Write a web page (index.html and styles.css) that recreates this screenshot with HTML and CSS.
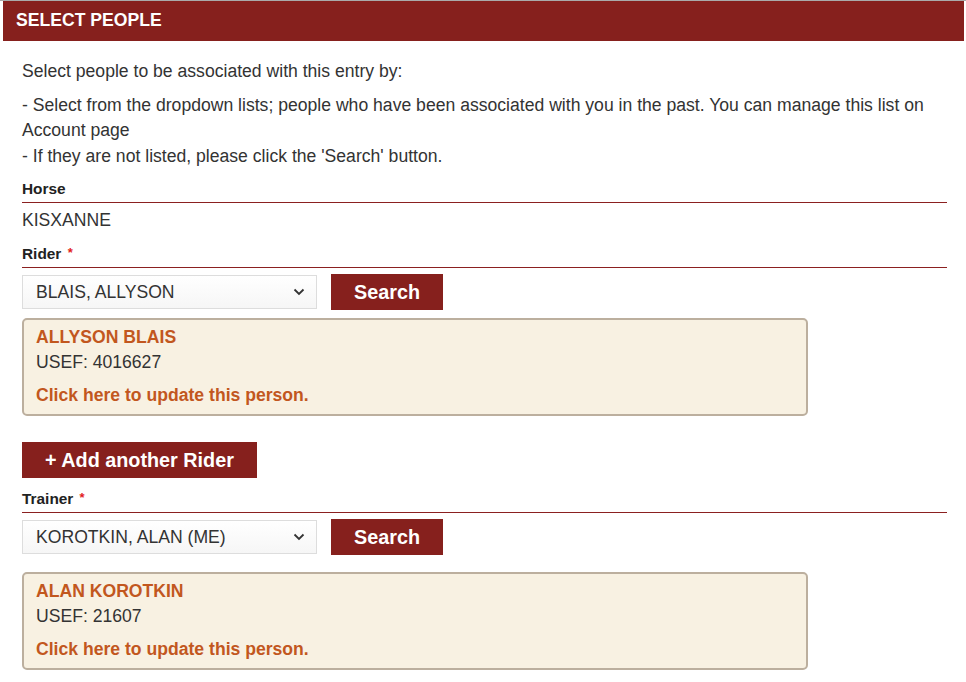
FILE: index.html
```html
<!DOCTYPE html>
<html>

<head>
    <meta charset="UTF-8" />
    <meta name="viewport" content="width=device-width, initial-scale=1" />
    <link rel="stylesheet" href="styles.css">
</head>

<body>
    <section class="panel">
        <header class="panel-head">SELECT PEOPLE</header>
        <div class="panel-body">
            <p class="intro">Select people to be associated with this entry by:</p>
            <p class="hint">
                - Select from the dropdown lists; people who have been associated with you in the past. You can manage this list on Account page<br>
                - If they are not listed, please click the 'Search' button.
            </p>

            <div class="field">
                <div class="label">Horse</div>
                <div class="value">KISXANNE</div>
            </div>

            <div class="field">
                <div class="label">Rider <span class="req">*</span></div>
                <div class="picker">
                    <div class="select-wrap">
                        <select>
                            <option>BLAIS, ALLYSON</option>
                        </select>
                        <svg class="chev" width="12" height="8" viewBox="0 0 12 8"><path d="M1.5 1.5 6 6l4.5-4.5" fill="none" stroke="#333" stroke-width="1.8"/></svg>
                    </div>
                    <button class="btn">Search</button>
                </div>
                <div class="card">
                    <div class="card-name">ALLYSON BLAIS</div>
                    <div class="card-id">USEF: 4016627</div>
                    <a class="card-link" href="#">Click here to update this person.</a>
                </div>
                <button class="btn btn-add">+ Add another Rider</button>
            </div>

            <div class="field">
                <div class="label">Trainer <span class="req">*</span></div>
                <div class="picker">
                    <div class="select-wrap">
                        <select>
                            <option>KOROTKIN, ALAN (ME)</option>
                        </select>
                        <svg class="chev" width="12" height="8" viewBox="0 0 12 8"><path d="M1.5 1.5 6 6l4.5-4.5" fill="none" stroke="#333" stroke-width="1.8"/></svg>
                    </div>
                    <button class="btn">Search</button>
                </div>
                <div class="card card-gap">
                    <div class="card-name">ALAN KOROTKIN</div>
                    <div class="card-id">USEF: 21607</div>
                    <a class="card-link" href="#">Click here to update this person.</a>
                </div>
            </div>
        </div>
    </section>
</body>

</html>
```

FILE: styles.css
```css
body {
    margin: 0;
    padding: 0;
    border-top: 1px solid #aaa;
    font-family: "Liberation Sans", Arial, sans-serif;
    color: #333;
    background: #fff;
}

.panel {
    margin: 0 2px 0 3px;
}

.panel-head {
    height: 40px;
    line-height: 38px;
    padding: 0 13px;
    background-color: #86201d;
    color: #fff;
    font-size: 17.6px;
    font-weight: bold;
}

.panel-body {
    padding: 18px 17px 20px 19px;
}

p {
    margin: 0;
    font-size: 17.6px;
    line-height: 25.5px;
}

.intro {
    margin-bottom: 8px;
}

.hint {
    margin-bottom: 10px;
}

.label {
    font-size: 15.4px;
    font-weight: bold;
    color: #222;
    line-height: 20px;
    padding-bottom: 3px;
    border-bottom: 1px solid #8b2020;
}

.req {
    color: #e21c1c;
    font-size: 13px;
    vertical-align: 2px;
    margin-left: 2px;
}

.value {
    font-size: 17.6px;
    line-height: 25px;
    padding: 5px 0 10px;
}

.picker {
    display: flex;
    align-items: center;
    gap: 14px;
    margin-top: 6px;
}

.select-wrap {
    position: relative;
    width: 295px;
}

select {
    display: block;
    width: 100%;
    height: 34px;
    padding: 0 30px 0 13px;
    border: 1px solid #ddd;
    border-radius: 0;
    background: linear-gradient(#fff, #f6f6f6);
    font-family: inherit;
    font-size: 17.6px;
    color: #333;
    appearance: none;
    -webkit-appearance: none;
    outline: none;
}

.chev {
    position: absolute;
    right: 12px;
    top: 13px;
    pointer-events: none;
}

.btn {
    height: 36px;
    border: none;
    outline: none;
    background-color: #86201d;
    color: #fff;
    font-family: inherit;
    font-size: 19.8px;
    font-weight: bold;
    padding: 0;
    width: 112px;
    cursor: pointer;
}

.btn-add {
    display: block;
    width: auto;
    padding: 0 23px;
    margin: 26px 0 10px;
}

.card {
    width: 786px;
    box-sizing: border-box;
    margin-top: 8px;
    padding: 6px 12px 8px;
    border: 2px solid #bcaf9e;
    border-radius: 5px;
    background-color: #f8f1e2;
    font-size: 17.6px;
}

.card-gap {
    margin-top: 17px;
}

.card-name {
    font-weight: bold;
    color: #c2571e;
    line-height: 22px;
}

.card-id {
    line-height: 22px;
    margin-top: 3px;
}

.card-link {
    display: block;
    margin-top: 11px;
    line-height: 22px;
    font-weight: bold;
    color: #c2571e;
    text-decoration: none;
}
```
